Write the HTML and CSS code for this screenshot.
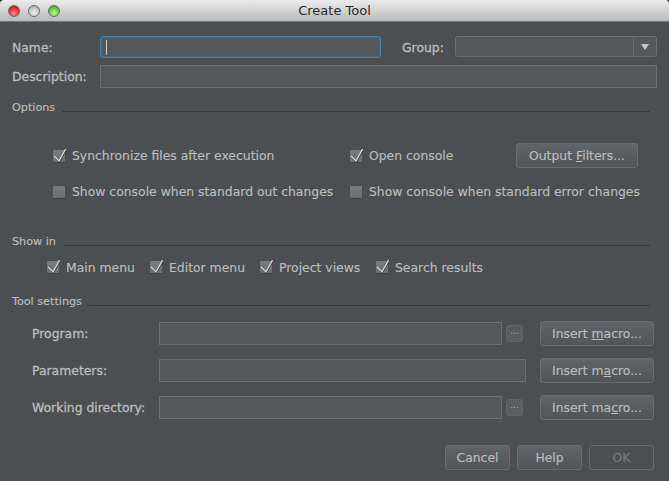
FILE: index.html
```html
<!DOCTYPE html>
<html lang="en">
<head>
  <meta charset="UTF-8" />
  <title>Create Tool</title>
  <link rel="stylesheet" href="styles.css">
</head>
<body>
  <svg class="defs" width="0" height="0">
    <symbol id="tick" viewBox="0 0 14 14">
      <path d="M2.3 7.6 L7.3 13 L13.8 1.5" fill="none" stroke="#303233" stroke-width="1.1" />
      <path d="M2 7 L7 12 L13.5 0.2" fill="none" stroke="#d8d9d9" stroke-width="1.3" />
    </symbol>
  </svg>
  <div class="window">
    <div class="titlebar">
      <span class="light red"></span>
      <span class="light grey"></span>
      <span class="light green"></span>
      <span class="title">Create Tool</span>
    </div>
    <div class="content">
      <div class="top-form">
        <label class="bold">Name:</label>
        <div class="input focused"><span class="caret"></span></div>
        <label class="bold group-label">Group:</label>
        <div class="combo"><span class="combo-arrow"><span class="arrow"></span></span></div>
        <label class="bold">Description:</label>
        <div class="input wide"></div>
      </div>

      <div class="section first-section"><span>Options</span><i></i></div>
      <div class="options">
        <div class="check"><span class="box"><svg><use href="#tick" /></svg></span>Synchronize files after execution</div>
        <div class="check"><span class="box"><svg><use href="#tick" /></svg></span>Open console</div>
        <button class="btn">Output <u>F</u>ilters...</button>
        <div class="check"><span class="box"></span>Show console when standard out changes</div>
        <div class="check"><span class="box"></span>Show console when standard error changes</div>
      </div>

      <div class="section showin-section"><span>Show in</span><i></i></div>
      <div class="showin">
        <div class="check"><span class="box"><svg><use href="#tick" /></svg></span>Main menu</div>
        <div class="check"><span class="box"><svg><use href="#tick" /></svg></span>Editor menu</div>
        <div class="check"><span class="box"><svg><use href="#tick" /></svg></span>Project views</div>
        <div class="check"><span class="box"><svg><use href="#tick" /></svg></span>Search results</div>
      </div>

      <div class="section tool-section"><span>Tool settings</span><i></i></div>
      <div class="tool-form">
        <label class="bold">Program:</label>
        <div class="field"><div class="input"></div><button class="browse">...</button></div>
        <button class="btn">Insert <u>m</u>acro...</button>
        <label class="bold">Parameters:</label>
        <div class="field"><div class="input"></div></div>
        <button class="btn">Insert m<u>a</u>cro...</button>
        <label class="bold">Working directory:</label>
        <div class="field"><div class="input"></div><button class="browse">...</button></div>
        <button class="btn">Insert ma<u>c</u>ro...</button>
      </div>

      <div class="footer">
        <button class="btn">Cancel</button>
        <button class="btn">Help</button>
        <button class="btn disabled">OK</button>
      </div>
    </div>
  </div>
</body>
</html>
```

FILE: styles.css
```css
html, body {
  margin: 0;
  height: 100%;
  background: #2a2b2c;
}
.defs {
  position: absolute;
}
.window {
  width: 669px;
  height: 481px;
  overflow: hidden;
  border-radius: 4px 4px 0 0;
  background: #4c4f52;
  color: #bbbdbd;
  font-family: "DejaVu Sans", sans-serif;
  font-size: 12.4px;
  -webkit-text-stroke: 0.15px #bbbdbd;
}
.titlebar {
  position: relative;
  display: flex;
  align-items: center;
  gap: 8px;
  height: 22px;
  padding-left: 8px;
  box-sizing: border-box;
  background: linear-gradient(#ececec, #b9b9b9);
  border-bottom: 1px solid #77797a;
}
.light {
  width: 12px;
  height: 12px;
  border-radius: 50%;
  box-sizing: border-box;
  border: 1px solid #6d6d6d;
}
.red { background: radial-gradient(circle at 50% 70%, #ff9a96, #e0262a 60%, #a81418); }
.grey { background: radial-gradient(circle at 50% 70%, #f0f0f0, #c4c4c4 60%, #929292); }
.green { background: radial-gradient(circle at 50% 70%, #c8f5a0, #5fc63c 60%, #2f8e1e); }
.title {
  position: absolute;
  left: 0;
  right: 0;
  text-align: center;
  color: #2c2c2c;
  font-size: 13px;
  -webkit-text-stroke: 0;
}
.content {
  padding: 14px 15px 0 12px;
}
.bold {
  -webkit-text-stroke: 0.3px #bbbdbd;
}
.input {
  box-sizing: border-box;
  height: 23px;
  background: #54585a;
  border: 1px solid #6c6f71;
}
.focused {
  height: 22px;
  border: 1px solid #4a7fa8;
  border-radius: 3px;
  box-shadow: inset 0 0 0 1px #47657c;
  padding: 3px 5px;
}
.caret {
  display: block;
  width: 1px;
  height: 15px;
  background: #c8c8c8;
}
.top-form {
  display: grid;
  grid-template-columns: 88px 281px 21px 53px 202px;
  grid-template-rows: 22px 23px;
  row-gap: 7px;
  align-items: center;
}
.group-label {
  grid-column: 4;
}
.wide {
  grid-column: 2 / 6;
}
.combo {
  display: flex;
  justify-content: flex-end;
  align-self: start;
  box-sizing: border-box;
  height: 21px;
  background: #54585a;
  border: 1px solid #6c6f71;
  border-radius: 3px;
}
.combo-arrow {
  display: flex;
  align-items: center;
  justify-content: center;
  width: 22px;
  border-left: 1px solid #6c6f71;
}
.arrow {
  width: 0;
  height: 0;
  border-left: 4px solid transparent;
  border-right: 4px solid transparent;
  border-top: 6px solid #c4c6c6;
}
.section {
  display: flex;
  align-items: center;
  gap: 7px;
  height: 16px;
  padding-right: 4px;
  font-size: 11.2px;
}
.section span {
  margin-bottom: 2px;
}
.section i {
  flex: 1;
  height: 1px;
  margin-top: 6px;
  background: #36383a;
}
.first-section {
  margin-top: 12px;
}
.showin-section {
  margin-top: 30px;
}
.tool-section {
  margin-top: 18px;
}
.check {
  display: flex;
  align-items: center;
  gap: 6px;
  white-space: nowrap;
}
.box {
  position: relative;
  flex: none;
  width: 14px;
  height: 14px;
  border: 1px solid #4a4c4e;
  border-bottom-color: #3e4042;
  border-radius: 2px;
  background: linear-gradient(#797c7e, #6c6f71);
  box-sizing: border-box;
}
.box svg {
  position: absolute;
  left: -1px;
  top: -1px;
  width: 14px;
  height: 14px;
  overflow: visible;
}
.options {
  display: grid;
  grid-template-columns: 297px 167px 122px;
  grid-auto-rows: 25px;
  row-gap: 11px;
  align-items: center;
  margin-top: 27px;
  padding-left: 40px;
}
.showin {
  display: grid;
  grid-template-columns: 103px 110px 116px auto;
  margin-top: 8px;
  padding-left: 34px;
  height: 18px;
  align-items: center;
}
.btn {
  box-sizing: border-box;
  height: 25px;
  padding: 0;
  font-family: inherit;
  font-size: 12.4px;
  color: #bbbdbd;
  -webkit-text-stroke: inherit;
  background: linear-gradient(#5f6568, #505557);
  border: 1px solid #696c6e;
  border-radius: 3px;
}
.disabled {
  background: none;
  color: #77797a;
  -webkit-text-stroke: 0.15px #77797a;
}
.tool-form {
  display: grid;
  grid-template-columns: 113px 367px 114px;
  column-gap: 14px;
  grid-auto-rows: 25px;
  row-gap: 12px;
  align-items: center;
  margin-top: 11px;
  padding-left: 20px;
}
.tool-form label {
  white-space: nowrap;
}
.field {
  display: flex;
  align-items: center;
  gap: 4px;
}
.field .input {
  flex: 1;
}
.browse {
  box-sizing: border-box;
  width: 17px;
  height: 17px;
  margin-right: 3px;
  padding: 0 0 5px;
  font-size: 10px;
  line-height: 1;
  color: #a9abab;
  -webkit-text-stroke: 0;
  background: #5a5e61;
  border: 1px solid #626568;
  border-radius: 3px;
}
.footer {
  display: grid;
  grid-template-columns: repeat(3, 65px);
  column-gap: 7px;
  justify-content: end;
  margin-top: 25px;
}
```
